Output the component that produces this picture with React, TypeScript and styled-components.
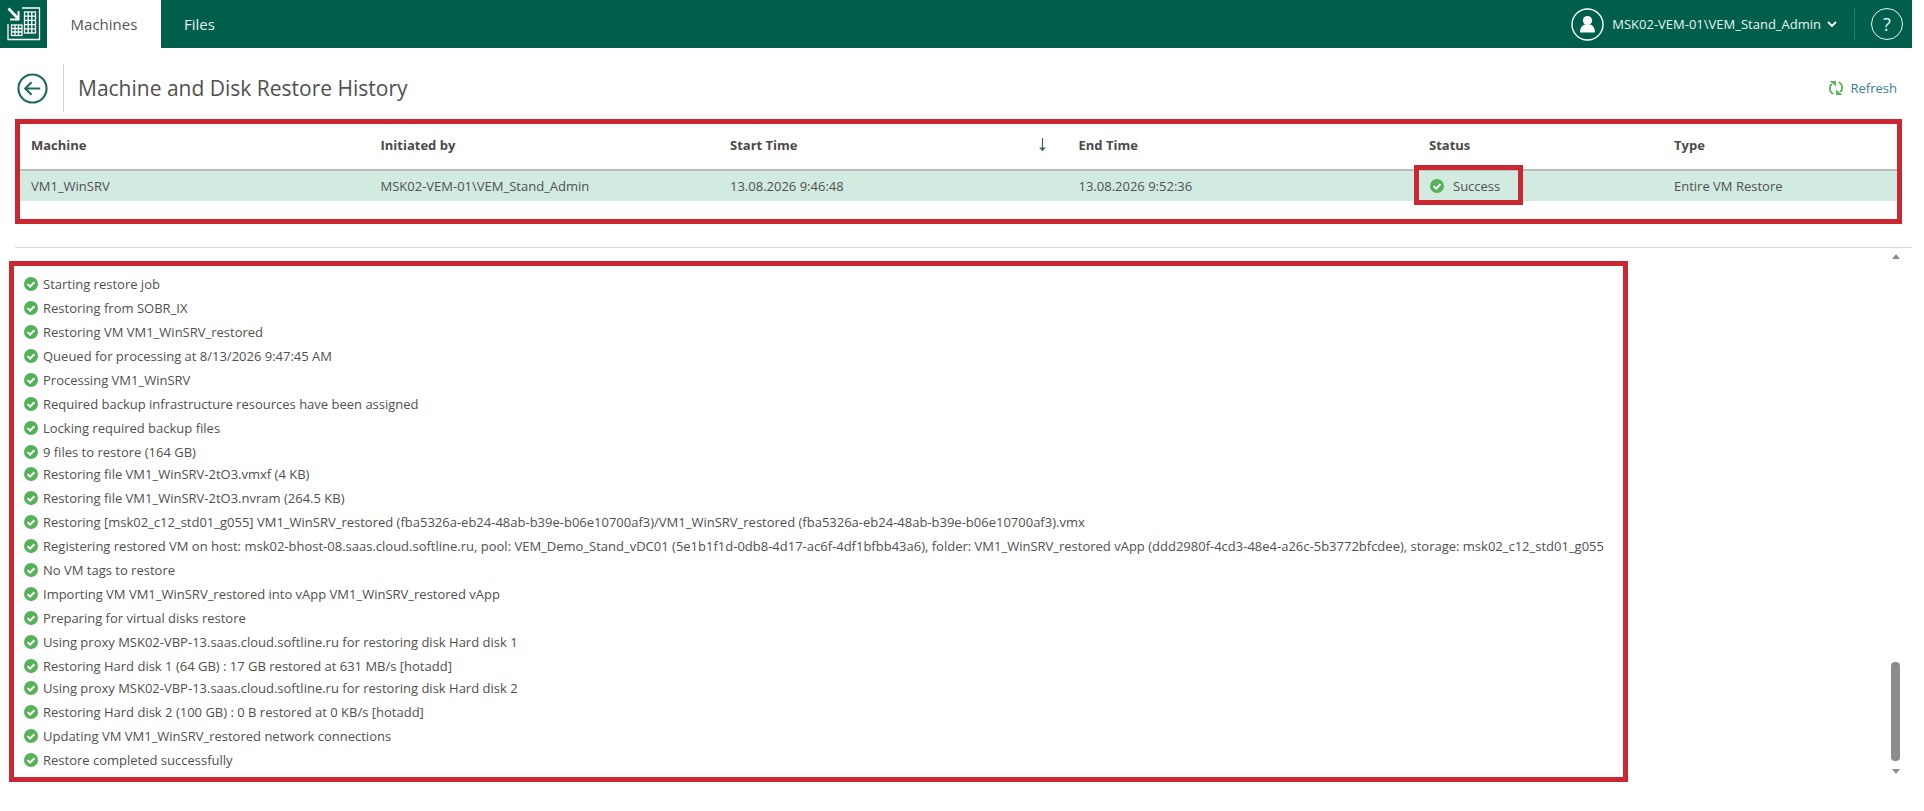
import React from 'react';
import styled, { createGlobalStyle } from 'styled-components';

const GlobalStyle = createGlobalStyle`
  html, body {
    margin: 0;
    padding: 0;
    background: #fff;
    font-family: "Open Sans", "Liberation Sans", sans-serif;
    font-size: 13px;
    color: #4f5150;
  }
`;

const Page = styled.div`
  width: 1912px;
  height: 811px;
  overflow: hidden;
`;

const TopBar = styled.header`
  display: flex;
  align-items: stretch;
  height: 48px;
  background: #005f4b;
  color: #fff;
`;

const LogoBox = styled.div`
  width: 47px;
  display: flex;
  align-items: center;
  justify-content: center;
`;

const Tab = styled.div<{ $active?: boolean }>`
  box-sizing: border-box;
  width: ${(p) => (p.$active ? '114px' : 'auto')};
  padding: 0 ${(p) => (p.$active ? '0' : '23px')};
  display: flex;
  align-items: center;
  justify-content: center;
  font-size: 15px;
  background: ${(p) => (p.$active ? '#fff' : 'transparent')};
  color: ${(p) => (p.$active ? '#555' : '#e6f4ef')};
`;

const UserArea = styled.div`
  margin-left: auto;
  display: flex;
  align-items: center;
`;

const UserName = styled.span`
  margin-left: 8px;
  font-size: 13px;
  color: #e9f5f1;
`;

const Chevron = styled.svg`
  margin-left: 6px;
`;

const BarDivider = styled.div`
  width: 1px;
  height: 32px;
  margin: 0 16px 0 17px;
  background: #2d7a68;
`;

const HelpCircle = styled.div`
  width: 30px;
  height: 30px;
  margin-right: 9px;
  border: 1.5px solid #e9f5f1;
  border-radius: 50%;
  display: flex;
  align-items: center;
  justify-content: center;
  font-size: 18px;
  color: #e9f5f1;
`;

const TitleRow = styled.div`
  box-sizing: border-box;
  height: 71px;
  display: flex;
  align-items: center;
  padding: 9px 15px 0 16px;
`;

const BackButton = styled.div`
  width: 32px;
  height: 32px;
  display: flex;
  align-items: center;
  justify-content: center;
`;

const TitleDivider = styled.div`
  width: 1px;
  height: 48px;
  margin: 0 14px 0 15px;
  background: #cfcfcf;
`;

const Title = styled.h1`
  margin: 0;
  font-size: 21px;
  font-weight: 400;
  color: #4f5150;
`;

const RefreshButton = styled.div`
  margin-left: auto;
  display: flex;
  align-items: center;
  gap: 7px;
  color: #3a7f93;
`;

const TableFrame = styled.section`
  box-sizing: border-box;
  width: 1887px;
  height: 105px;
  margin-left: 15px;
  border: 5px solid #cb2731;
`;

const GRID = '349.5px 349.5px 348.5px 350.5px 245px 1fr';

const HeadRow = styled.div`
  display: grid;
  grid-template-columns: ${GRID};
  height: 45px;
  border-bottom: 2px solid #b9bfbc;
`;

const HeadCell = styled.div`
  display: flex;
  align-items: center;
  justify-content: space-between;
  padding: 0 21px 3px 11px;
  font-weight: 700;
  color: #4a4a4a;
`;

const BodyRow = styled.div`
  display: grid;
  grid-template-columns: ${GRID};
  height: 30px;
  background: #d2ebe1;
`;

const BodyCell = styled.div`
  display: flex;
  align-items: center;
  padding-left: 11px;
  color: #505050;
`;

const StatusCell = styled.div`
  display: flex;
  align-items: flex-start;
  padding-left: 1px;
`;

const StatusFrame = styled.div`
  width: 99px;
  height: 30px;
  margin-top: -1px;
  padding: 1px 0 0 11px;
  box-sizing: border-box;
  display: flex;
  align-items: center;
  gap: 9px;
  outline: 5px solid #cb2731;
  color: #505050;
`;

const Divider = styled.div`
  height: 1px;
  margin: 23px 0 0 15px;
  background: #dcdcdc;
`;

const LogArea = styled.div`
  display: flex;
  justify-content: space-between;
  align-items: flex-start;
  padding: 13px 12px 0 9px;
`;

const LogFrame = styled.section`
  box-sizing: border-box;
  width: 1619px;
  height: 521px;
  border: 5px solid #cb2731;
  padding: 7px 0 0 10px;
`;

const LogRow = styled.div<{ $tight?: boolean }>`
  display: flex;
  align-items: center;
  gap: 5px;
  height: 22px;
  margin-top: ${(p) => (p.$tight ? '0' : '2px')};
  white-space: nowrap;
  color: #505050;

  &:first-child {
    margin-top: 0;
  }
`;

const ScrollBar = styled.div`
  width: 9px;
  height: 520px;
  margin: -7px 0 0;
  display: flex;
  flex-direction: column;
  align-items: center;
`;

const ScrollArrow = styled.div<{ $down?: boolean }>`
  width: 0;
  height: 0;
  border-left: 4.5px solid transparent;
  border-right: 4.5px solid transparent;
  ${(p) => (p.$down ? 'border-top: 5px solid #8c8c8c;' : 'border-bottom: 5px solid #8c8c8c;')}
`;

const ScrollThumb = styled.div`
  width: 9px;
  height: 99px;
  margin: auto 0 8px;
  border-radius: 4px;
  background: #8c8c8c;
`;

const rows = [
  'Starting restore job',
  'Restoring from SOBR_IX',
  'Restoring VM VM1_WinSRV_restored',
  'Queued for processing at 8/13/2026 9:47:45 AM',
  'Processing VM1_WinSRV',
  'Required backup infrastructure resources have been assigned',
  'Locking required backup files',
  '9 files to restore (164 GB)',
  'Restoring file VM1_WinSRV-2tO3.vmxf (4 KB)',
  'Restoring file VM1_WinSRV-2tO3.nvram (264.5 KB)',
  'Restoring [msk02_c12_std01_g055] VM1_WinSRV_restored (fba5326a-eb24-48ab-b39e-b06e10700af3)/VM1_WinSRV_restored (fba5326a-eb24-48ab-b39e-b06e10700af3).vmx',
  'Registering restored VM on host: msk02-bhost-08.saas.cloud.softline.ru, pool: VEM_Demo_Stand_vDC01 (5e1b1f1d-0db8-4d17-ac6f-4df1bfbb43a6), folder: VM1_WinSRV_restored vApp (ddd2980f-4cd3-48e4-a26c-5b3772bfcdee), storage: msk02_c12_std01_g055',
  'No VM tags to restore',
  'Importing VM VM1_WinSRV_restored into vApp VM1_WinSRV_restored vApp',
  'Preparing for virtual disks restore',
  'Using proxy MSK02-VBP-13.saas.cloud.softline.ru for restoring disk Hard disk 1',
  'Restoring Hard disk 1 (64 GB) : 17 GB restored at 631 MB/s [hotadd]',
  'Using proxy MSK02-VBP-13.saas.cloud.softline.ru for restoring disk Hard disk 2',
  'Restoring Hard disk 2 (100 GB) : 0 B restored at 0 KB/s [hotadd]',
  'Updating VM VM1_WinSRV_restored network connections',
  'Restore completed successfully',
];

// these two lines sit closer to the one above them in the reference
const tightRows = [8, 17];

function CheckIcon() {
  return (
    <svg width="14" height="14" viewBox="0 0 14 14" style={{ flex: 'none' }}>
      <circle cx="7" cy="7" r="7" fill="#56b159" />
      <path d="M3.6 7.1 6.1 9.6 10.4 5.2" fill="none" stroke="#fff" strokeWidth="2" />
    </svg>
  );
}

function Logo() {
  return (
    <svg width="34" height="34" viewBox="0 0 34 34" fill="none" stroke="#fff" strokeWidth="1.3">
      <path d="M15 1H32.5V32.5H1V17" />
      <path d="M1.5 1.5 10.5 11" strokeWidth="2.6" />
      <path d="M11.5 4V12.5H3" strokeWidth="2" />
      <rect x="4.5" y="18" width="10.5" height="10.5" />
      <path d="M4.5 21.5H15M4.5 25H15M8 18V28.5M11.5 18V28.5" />
      <rect x="17.5" y="5" width="11" height="21" />
      <path d="M17.5 9.2H28.5M17.5 13.4H28.5M17.5 17.6H28.5M17.5 21.8H28.5M21.2 5V26M24.8 5V26" />
    </svg>
  );
}

function UserAvatar() {
  return (
    <svg width="33" height="33" viewBox="0 0 33 33">
      <circle cx="16.5" cy="16.5" r="15.5" fill="none" stroke="#fff" strokeWidth="1.4" />
      <circle cx="16.5" cy="12.5" r="4.6" fill="#fff" />
      <path d="M9 24.5c0-5 2.5-7.5 5-8h5c2.5.5 5 3 5 8z" fill="#fff" />
    </svg>
  );
}

function BackIcon() {
  return (
    <svg width="31" height="31" viewBox="0 0 32 32" fill="none" stroke="#1f6b58" strokeWidth="2.2">
      <circle cx="16" cy="16" r="14.5" />
      <path d="M24 16H9M15 9.5 8.5 16 15 22.5" />
    </svg>
  );
}

function RefreshIcon() {
  return (
    <svg width="16" height="16" viewBox="0 0 16 16" fill="none" stroke="#5cb562" strokeWidth="1.8">
      <path d="M5.5 14A6.2 6.2 0 0 1 3.8 3.8" />
      <path d="M10.5 2A6.2 6.2 0 0 1 12.2 12.2" />
      <path d="M1.5 1H8V6.5Z" fill="#5cb562" stroke="none" />
      <path d="M14.5 15H8V9.5Z" fill="#5cb562" stroke="none" />
    </svg>
  );
}

function SortArrow() {
  return (
    <svg width="9" height="14" viewBox="0 0 9 14" fill="none" stroke="#3c6b5c" strokeWidth="1.2">
      <path d="M4.5 0V13" />
      <path d="M1 9.5 4.5 13 8 9.5Z" fill="#3c6b5c" stroke="none" />
    </svg>
  );
}

function App() {
  return (
    <Page>
      <GlobalStyle />
      <TopBar>
        <LogoBox>
          <Logo />
        </LogoBox>
        <Tab $active>Machines</Tab>
        <Tab>Files</Tab>
        <UserArea>
          <UserAvatar />
          <UserName>MSK02-VEM-01\VEM_Stand_Admin</UserName>
          <Chevron width="10" height="7" viewBox="0 0 10 7" fill="none" stroke="#fff" strokeWidth="1.8">
            <path d="M1 1 5 5 9 1" />
          </Chevron>
          <BarDivider />
          <HelpCircle>?</HelpCircle>
        </UserArea>
      </TopBar>

      <TitleRow>
        <BackButton>
          <BackIcon />
        </BackButton>
        <TitleDivider />
        <Title>Machine and Disk Restore History</Title>
        <RefreshButton>
          <RefreshIcon />
          Refresh
        </RefreshButton>
      </TitleRow>

      <TableFrame>
        <HeadRow>
          <HeadCell>Machine</HeadCell>
          <HeadCell>Initiated by</HeadCell>
          <HeadCell>
            Start Time
            <SortArrow />
          </HeadCell>
          <HeadCell>End Time</HeadCell>
          <HeadCell>Status</HeadCell>
          <HeadCell>Type</HeadCell>
        </HeadRow>
        <BodyRow>
          <BodyCell>VM1_WinSRV</BodyCell>
          <BodyCell>MSK02-VEM-01\VEM_Stand_Admin</BodyCell>
          <BodyCell>13.08.2026 9:46:48</BodyCell>
          <BodyCell>13.08.2026 9:52:36</BodyCell>
          <StatusCell>
            <StatusFrame>
              <CheckIcon />
              Success
            </StatusFrame>
          </StatusCell>
          <BodyCell>Entire VM Restore</BodyCell>
        </BodyRow>
      </TableFrame>

      <Divider />

      <LogArea>
        <LogFrame>
          {rows.map((text, idx) => (
            <LogRow key={idx} $tight={tightRows.includes(idx)}>
              <CheckIcon />
              {text}
            </LogRow>
          ))}
        </LogFrame>
        <ScrollBar>
          <ScrollArrow />
          <ScrollThumb />
          <ScrollArrow $down />
        </ScrollBar>
      </LogArea>
    </Page>
  );
}

export default App;
